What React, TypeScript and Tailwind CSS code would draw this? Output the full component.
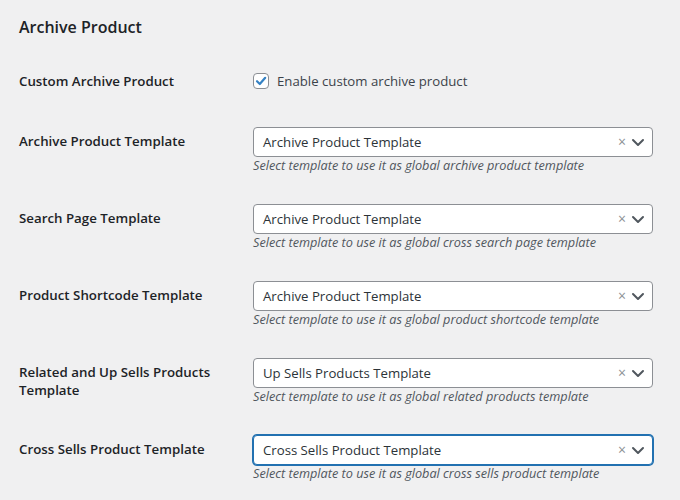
import React from "react";

const font = { fontFamily: '"Open Sans", "Noto Sans", Arial, sans-serif' };

function Select({ value, focused }: { value: string; focused?: boolean }) {
  return (
    <div
      className={
        "flex h-[30px] w-[400px] items-center rounded-[4px] bg-white pl-[9px] pr-[7px] " +
        (focused
          ? "border border-[#2271b1] shadow-[0_0_0_1px_#2271b1]"
          : "border border-[#8c8f94]")
      }
    >
      <span className="flex-1 text-[13.2px] text-[#2c3338] leading-[20px]">{value}</span>
      <span className="mr-[5px] text-[14px] leading-[14px] text-[#8c8f94]">×</span>
      <svg width="14" height="14" viewBox="0 0 14 14">
        <path d="M2 5 L7 10 L12 5" fill="none" stroke="#50575e" strokeWidth="2" strokeLinecap="round" strokeLinejoin="round" />
      </svg>
    </div>
  );
}

function Row({
  label,
  value,
  desc,
  focused,
}: {
  label: React.ReactNode;
  value: string;
  desc: string;
  focused?: boolean;
}) {
  return (
    <div className="flex py-[15px]">
      <div className="w-[234px] shrink-0 pt-[5px] text-[13.3px] font-semibold leading-[18px] text-[#1d2327]">
        {label}
      </div>
      <div className="flex flex-col">
        <Select value={value} focused={focused} />
        <div className="text-[12.7px] italic leading-[17px] text-[#50575e]">{desc}</div>
      </div>
    </div>
  );
}

export default function App() {
  return (
    <div className="h-[500px] w-[680px] overflow-hidden bg-[#f0f0f1] pl-[19px]" style={font}>
      <div className="h-[58px] pt-[15px]">
        <h2 className="text-[16px] font-semibold leading-[24px] text-[#1d2327]">Archive Product</h2>
      </div>
      <div className="flex h-[54px] items-start pt-[14px]">
        <div className="w-[234px] shrink-0 text-[13.3px] font-semibold leading-[18px] text-[#1d2327]">
          Custom Archive Product
        </div>
        <div className="flex h-[18px] items-center">
          <span className="flex h-[16px] w-[16px] items-center justify-center rounded-[4px] border border-[#8c8f94] bg-white">
            <svg width="14" height="14" viewBox="0 0 14 14">
              <path d="M3 7.2 L5.8 10 L11.2 3.8" fill="none" stroke="#3582c4" strokeWidth="2.2" strokeLinecap="round" strokeLinejoin="round" />
            </svg>
          </span>
          <span className="ml-[8px] text-[13.2px] leading-[18px] text-[#3c434a]">Enable custom archive product</span>
        </div>
      </div>
      <Row
        label="Archive Product Template"
        value="Archive Product Template"
        desc="Select template to use it as global archive product template"
      />
      <Row
        label="Search Page Template"
        value="Archive Product Template"
        desc="Select template to use it as global cross search page template"
      />
      <Row
        label="Product Shortcode Template"
        value="Archive Product Template"
        desc="Select template to use it as global product shortcode template"
      />
      <Row
        label={
          <>
            Related and Up Sells Products
            <br />
            Template
          </>
        }
        value="Up Sells Products Template"
        desc="Select template to use it as global related products template"
      />
      <Row
        label="Cross Sells Product Template"
        value="Cross Sells Product Template"
        desc="Select template to use it as global cross sells product template"
        focused
      />
    </div>
  );
}
